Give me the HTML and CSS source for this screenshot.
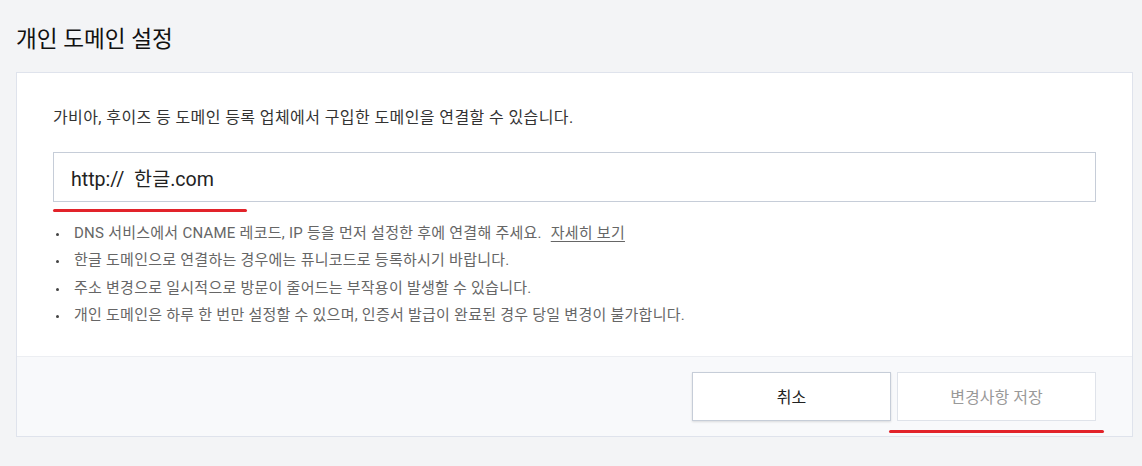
FILE: index.html
```html
<!DOCTYPE html>
<html lang="ko">
<head>
<meta charset="utf-8">
<title>개인 도메인 설정</title>
<link rel="stylesheet" href="styles.css">
</head>
<body>
<div class="page">
  <h1 class="title">개인 도메인 설정</h1>
  <section class="card">
    <div class="card-body">
      <p class="desc">가비아, 후이즈 등 도메인 등록 업체에서 구입한 도메인을 연결할 수 있습니다.</p>
      <div class="field">
        <div class="input">http://&nbsp; 한글.com</div>
        <span class="mark mark-input"></span>
      </div>
      <ul class="notes">
        <li>DNS 서비스에서 CNAME 레코드, IP 등을 먼저 설정한 후에 연결해 주세요. <a class="more" href="#">자세히 보기</a></li>
        <li>한글 도메인으로 연결하는 경우에는 퓨니코드로 등록하시기 바랍니다.</li>
        <li>주소 변경으로 일시적으로 방문이 줄어드는 부작용이 발생할 수 있습니다.</li>
        <li>개인 도메인은 하루 한 번만 설정할 수 있으며, 인증서 발급이 완료된 경우 당일 변경이 불가합니다.</li>
      </ul>
    </div>
    <div class="card-footer">
      <button class="btn btn-cancel" type="button">취소</button>
      <div class="save-wrap">
        <button class="btn btn-save" type="button">변경사항 저장</button>
        <span class="mark mark-save"></span>
      </div>
    </div>
  </section>
</div>
</body>
</html>
```
FILE: styles.css
```css
* { box-sizing: border-box; }
html, body { margin: 0; padding: 0; }
body {
  background: #f3f4f6;
  font-family: Roboto, "Noto Sans CJK KR", sans-serif;
  color: #222;
}
.page {
  padding: 24px 10px 0 16px;
}
.title {
  margin: 0 0 16px;
  font-size: 22.6px;
  line-height: 32px;
  font-weight: 400;
  color: #111;
}
.card {
  width: 1117px;
  background: #fff;
  border: 1px solid #dfe3ec;
}
.card-body {
  padding: 34px 36px 26px;
}
.desc {
  margin: 0;
  font-size: 16px;
  line-height: 22px;
  letter-spacing: 0.4px;
  color: #333;
}
.field {
  position: relative;
  margin-top: 23px;
}
.input {
  height: 50px;
  border: 1px solid #c6cdd8;
  padding: 0 17px;
  display: flex;
  align-items: center;
  font-size: 19.6px;
  color: #222;
}
.mark {
  position: absolute;
  height: 3px;
  border-radius: 2px;
  background: #e2232a;
}
.mark-input {
  left: 0;
  top: 57px;
  width: 194px;
}
.notes {
  list-style: none;
  margin: 18px 0 0;
  padding: 0;
}
.notes li {
  position: relative;
  padding-left: 21px;
  font-size: 15px;
  line-height: 27.4px;
  letter-spacing: 0.25px;
  color: #666;
}
.notes li::before {
  content: "";
  position: absolute;
  left: 3px;
  top: 13px;
  width: 3px;
  height: 3px;
  border-radius: 50%;
  background: #444;
}
.more {
  margin-left: 5px;
  color: #666;
  text-decoration: underline;
  text-underline-offset: 3px;
}
.card-footer {
  display: flex;
  justify-content: flex-end;
  gap: 6px;
  padding: 15px 36px 15px;
  background: #f8f9fb;
  border-top: 1px solid #eceef2;
}
.btn {
  height: 49px;
  background: #fff;
  font-family: inherit;
  font-size: 16px;
  cursor: pointer;
}
.btn-cancel {
  width: 199px;
  border: 1px solid #c6cdd8;
  box-shadow: 0 1px 2px rgba(0, 0, 0, 0.12);
  color: #222;
}
.save-wrap {
  position: relative;
}
.btn-save {
  width: 199px;
  border: 1px solid #dfe3ea;
  color: #999;
}
.mark-save {
  left: -8px;
  top: 58px;
  width: 215px;
}
```
